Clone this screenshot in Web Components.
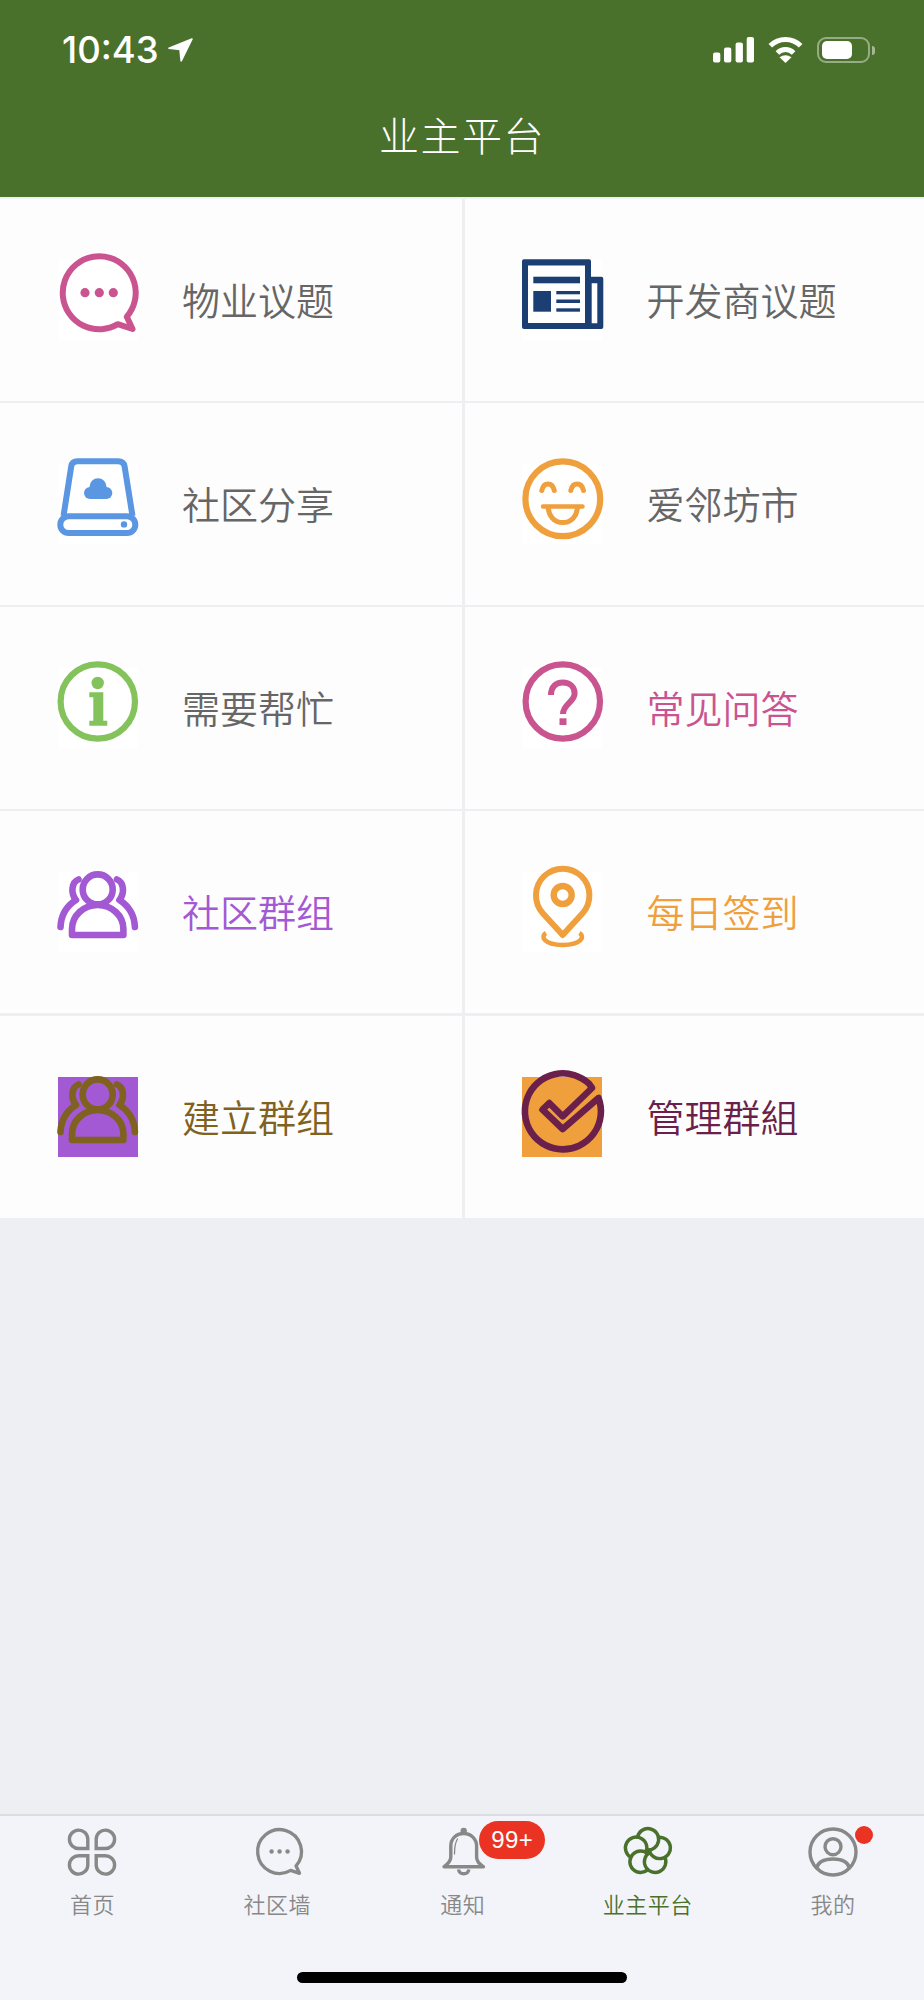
<!DOCTYPE html>
<html lang="zh-CN">
<head>
<meta charset="utf-8">
<title>业主平台</title>
<style>
html,body{margin:0;padding:0;background:#eeeff3;}
body{font-family:"Noto Sans CJK SC","Noto Sans",sans-serif;width:924px;height:2000px;overflow:hidden;}
</style>
</head>
<body>
<app-shell>
  <app-header slot="top" title-text="业主平台"></app-header>
  <menu-grid slot="main">
    <menu-item label="物业议题" icon="chat" icon-color="#c9548f"></menu-item>
    <menu-item label="开发商议题" icon="news" icon-color="#1c3f73"></menu-item>
    <menu-item label="社区分享" icon="drive" icon-color="#5b96e3"></menu-item>
    <menu-item label="爱邻坊市" icon="smile" icon-color="#ef9f3c"></menu-item>
    <menu-item label="需要帮忙" icon="info" icon-color="#84c25c"></menu-item>
    <menu-item label="常见问答" icon="question" icon-color="#c9548f" text-color="#c9548f"></menu-item>
    <menu-item label="社区群组" icon="people" icon-color="#a259d3" text-color="#a259d3"></menu-item>
    <menu-item label="每日签到" icon="pin" icon-color="#ef9f3c" text-color="#ef9f3c"></menu-item>
    <menu-item label="建立群组" icon="people" icon-color="#7f6120" icon-bg="#a259d3" text-color="#7f6120"></menu-item>
    <menu-item label="管理群組" icon="check" icon-color="#6b1f4b" icon-bg="#ef9f3c" text-color="#6b1f4b"></menu-item>
  </menu-grid>
  <tab-bar slot="bottom">
    <tab-item label="首页" icon="petals" w="48" h="50"></tab-item>
    <tab-item label="社区墙" icon="tabchat" w="48" h="50" dx="2.5"></tab-item>
    <tab-item label="通知" icon="bell" w="42" h="50" dx="1.8" ldx=".7" badge="99+"></tab-item>
    <tab-item label="业主平台" icon="flower" w="50" h="50" ldx="1" active></tab-item>
    <tab-item label="我的" icon="user" w="50" h="50" dx="1.7" ldx="1.4" dot></tab-item>
  </tab-bar>
</app-shell>
<script>
const ICONS = {
  chat: `<path fill="none" stroke="currentColor" stroke-width="6" stroke-linejoin="round" d="M59.8 64.2A36.5 36.5 0 1 1 68.8 56.7L74.5 69Z"/><g fill="currentColor"><circle cx="27" cy="32.7" r="4.6"/><circle cx="41.3" cy="32.7" r="4.6"/><circle cx="55.3" cy="32.7" r="4.6"/></g>`,
  news: `<path fill="currentColor" d="M2 -.7H67a2 2 0 0 1 2 2V16.7H79.3a2 2 0 0 1 2 2V67a2 2 0 0 1 -2 2H2a2 2 0 0 1 -2 -2V1.3a2 2 0 0 1 2 -2Z"/><path fill="#fff" d="M6 5.5H63V63H6ZM69.7 23.3H75.3V63.3H69.7Z"/><g fill="currentColor"><rect x="11.3" y="16.7" width="46.7" height="6.6"/><rect x="11.3" y="31" width="17.7" height="20.7"/><rect x="34.3" y="31" width="23.7" height="3.3"/><rect x="34.3" y="39.5" width="23.7" height="3.5"/><rect x="34.3" y="48.3" width="23.7" height="3.4"/></g>`,
  drive: `<g fill="none" stroke="currentColor" stroke-width="6" stroke-linejoin="round"><path d="M5.5 52L13.2 2.5Q14 -2.7 19.5 -2.7H60Q65.8 -2.7 66.6 2.5L74.5 52"/><rect x="2.3" y="52.3" width="75" height="16.7" rx="8.3"/></g><g fill="currentColor"><circle cx="66" cy="60.4" r="3.2"/><circle cx="40" cy="22.8" r="8.5"/><circle cx="32" cy="29" r="6"/><circle cx="48.3" cy="29" r="6"/><rect x="32" y="25" width="16" height="10"/></g>`,
  smile: `<g fill="none" stroke="currentColor"><circle cx="40.8" cy="34.8" r="37.4" stroke-width="6.2"/><path stroke-width="5" stroke-linecap="round" d="M19.8 26.5C20.8 22 23 20 26 20S31.3 22 32.3 26.5M48.8 26.5C49.8 22 52 20 55.1 20S60.5 22 61.5 26.5"/><path stroke-width="4.4" stroke-linecap="round" d="M21 42.5H60.5"/><path stroke-width="5" d="M26 42.5C26.7 52 32 58.6 40.8 58.6S55 52 55.6 42.5"/></g>`,
  info: `<circle cx="39.8" cy="33.5" r="37.2" fill="none" stroke="currentColor" stroke-width="6.2"/><circle cx="39.7" cy="15" r="6.2" fill="currentColor"/><path fill="currentColor" d="M31.3 24.3H45.3V52.7H49.3V57.7H31.3V52.7H35.3V29.3H31.3Z"/>`,
  question: `<circle cx="40.8" cy="33.5" r="37.2" fill="none" stroke="currentColor" stroke-width="6.2"/><path fill="none" stroke="currentColor" stroke-width="6" d="M29 27C29 18.5 34 14.5 40.8 14.5C48 14.5 52.6 19 52.6 25.5C52.6 34 41 36 41 46"/><rect x="37.5" y="50.3" width="7" height="6.7" fill="currentColor"/>`,
  people: `<g fill="none" stroke="currentColor" stroke-width="6.6" stroke-linecap="round" stroke-linejoin="round"><circle cx="39.7" cy="17.4" r="15"/><path d="M14 63V57A25.7 24 0 0 1 65.4 57V63Z"/><path d="M20.5 7.5C14 10 12 20.5 18 28C8.5 34 3 44 2.5 55M58.9 7.5C65.4 10 67.4 20.5 61.4 28C70.9 34 76.4 44 76.9 55"/></g>`,
  pin: `<g fill="none" stroke="currentColor" transform="translate(0 1)"><path stroke-width="6" stroke-linejoin="round" d="M40.7 62L21 40.4A26.7 26.7 0 1 1 60.4 40.4Z"/><circle cx="40.7" cy="22" r="9" stroke-width="6.4"/><path stroke-width="4.6" d="M24 60C18.5 63 21 71.6 40.7 72C60.4 71.6 63 63 57.4 60"/></g>`,
  check: `<path fill="none" stroke="currentColor" stroke-width="6.6" stroke-linejoin="round" d="M70 11L67 6.7A38 38 0 1 0 76.5 21L40.7 52L20.5 32.7L27.3 26L40.7 39.3Z"/>`,
  petals: `<g fill="none" stroke="currentColor" stroke-width="3.4"><path d="M19.8 21.5H10.8A9.2 9.2 0 1 1 19.8 12Z"/><path d="M28.2 21.5H37.2A9.2 9.2 0 1 0 28.2 12Z"/><path d="M19.8 28.7H10.8A9.2 9.2 0 1 0 19.8 38.2Z"/><path d="M28.2 28.7H37.2A9.2 9.2 0 1 1 28.2 38.2Z"/></g>`,
  tabchat: `<path fill="none" stroke="currentColor" stroke-width="5.6" stroke-linejoin="round" d="M59.8 64.2A36.5 36.5 0 1 1 68.8 56.7L74.5 69Z"/><g fill="currentColor"><circle cx="28" cy="32.7" r="3.7"/><circle cx="41.3" cy="32.7" r="3.7"/><circle cx="54.6" cy="32.7" r="3.7"/></g>`,
  bell: `<g fill="none" stroke="currentColor"><path stroke-width="3.4" stroke-linejoin="round" d="M1 39.8C5.5 36.5 7.8 34 7.8 30V19C7.8 12 13 6.5 20.7 6.5C28 6.5 33.6 12 33.6 19V30C33.6 34.5 36 36.5 40.5 39.8Z"/><path stroke-width="3.4" d="M15.5 42.5A5.3 5.3 0 0 0 25.9 42.5"/><path stroke-width="1.3" stroke-linecap="round" d="M14.5 12C12.5 15 11.5 19 11.5 27"/></g><circle cx="20.7" cy="4" r="3.2" fill="currentColor"/>`,
  flower: `<g transform="translate(25.9 24.7) scale(.95)" fill="none" stroke="currentColor" stroke-width="3.6" stroke-linecap="round"><path d="M-11.05 -15.2A11.3 11.3 0 1 1 -1.3 -1.8"/><path transform="rotate(72)" d="M-11.05 -15.2A11.3 11.3 0 1 1 -1.3 -1.8"/><path transform="rotate(144)" d="M-11.05 -15.2A11.3 11.3 0 1 1 -1.3 -1.8"/><path transform="rotate(216)" d="M-11.05 -15.2A11.3 11.3 0 1 1 -1.3 -1.8"/><path transform="rotate(288)" d="M-11.05 -15.2A11.3 11.3 0 1 1 -1.3 -1.8"/></g>`,
  user: `<g transform="translate(25 25)" fill="none" stroke="currentColor" stroke-width="3.4"><circle r="23"/><circle cy="-5.3" r="8"/><path d="M-16.5 16.5C-15 9 -8 7 0 7C8 7 15 9 16.5 16.5"/></g>`
};
const VIEW = {tabchat:"2 -6 80 79",bell:"0 0 42 50",petals:"0 0 48 50",flower:"0 0 50 50",user:"0 0 50 50"};

class AppShell extends HTMLElement{
  constructor(){super();this.attachShadow({mode:"open"}).innerHTML=`<style>
  :host{display:flex;flex-direction:column;width:924px;height:2000px;background:#eeeff3;}
  .main{flex:1;min-height:0;display:block;}
  </style><slot name="top"></slot><div class="main"><slot name="main"></slot></div><slot name="bottom"></slot>`;}
}
class AppHeader extends HTMLElement{
  constructor(){super();this.attachShadow({mode:"open"}).innerHTML=`<style>
  :host{display:block;background:#4a712c;color:#fff;height:197px;}
  status-bar{height:100px;}
  .title{text-align:center;font:300 40px/48px "Noto Sans CJK SC",sans-serif;padding-top:10px;letter-spacing:1.5px;}
  </style><status-bar></status-bar><div class="title"></div>`;
  this.shadowRoot.querySelector(".title").textContent=this.getAttribute("title-text");}
}
class StatusBar extends HTMLElement{
  constructor(){super();this.attachShadow({mode:"open"}).innerHTML=`<style>
  :host{display:flex;align-items:flex-start;justify-content:space-between;padding:37px 49px 0 62px;box-sizing:border-box;color:#fff;}
  .l{display:flex;align-items:center;gap:9px;height:26px;}
  .t{font:500 36.5px/26px Inter,"Liberation Sans",sans-serif;}
  .r{display:flex;align-items:flex-start;gap:14px;height:26px;}
  svg{display:block;}
  .batt{display:flex;align-items:center;gap:2px;}
  .shell{width:53px;height:26px;box-sizing:border-box;border:2px solid rgba(255,255,255,.42);border-radius:9px;padding:2px 0 0 3px;}
  .fill{width:30px;height:18px;background:#fff;border-radius:5px;}
  .cap{width:3px;height:9px;background:rgba(255,255,255,.5);border-radius:0 3px 3px 0;}
  </style>
  <div class="l"><span class="t">10:43</span><svg width="25" height="24" viewBox="0 0 25 24"><path fill="#fff" stroke="#fff" stroke-width="1.6" stroke-linejoin="round" d="M24 1L13.2 22.8L12 11.4L1 10.2Z"/></svg></div>
  <div class="r">
    <svg width="41" height="26" viewBox="0 0 41 26"><g fill="#fff"><rect x="0" y="15.6" width="7.3" height="10" rx="2"/><rect x="11" y="10.6" width="7.3" height="15" rx="2"/><rect x="22.6" y="5.6" width="7.3" height="20" rx="2"/><rect x="33.7" y="0" width="7.3" height="25.6" rx="2"/></g></svg>
    <svg width="35" height="26" viewBox="0 0 35 26"><g fill="none" stroke="#fff" stroke-width="5"><path d="M2.3 8.8A21.5 21.5 0 0 1 32.7 8.8"/><path d="M9.4 15.9A11.5 11.5 0 0 1 25.6 15.9"/></g><path fill="#fff" d="M17.5 26L11.5 20.2Q17.5 16.5 23.5 20.2Z"/></svg>
    <div class="batt"><div class="shell"><div class="fill"></div></div><div class="cap"></div></div>
  </div>`;}
}
class MenuGrid extends HTMLElement{
  constructor(){super();this.attachShadow({mode:"open"}).innerHTML=`<style>
  :host{display:grid;grid-template-columns:462px 459px;grid-auto-rows:202px;column-gap:3px;row-gap:2.2px;padding-top:1.8px;}
  </style><slot></slot>`;}
}
class AppIcon extends HTMLElement{
  connectedCallback(){
    const n=this.getAttribute("name"),w=this.getAttribute("w")||80,h=this.getAttribute("h")||80,v=this.getAttribute("view")||VIEW[n]||"0 0 80 80";
    this.attachShadow({mode:"open"}).innerHTML=`<style>:host{display:block;width:${w}px;height:${h}px;}svg{display:block;overflow:visible;}</style><svg width="${w}" height="${h}" viewBox="${v}">${ICONS[n]}</svg>`;
  }
}
class MenuItem extends HTMLElement{
  constructor(){super();this.attachShadow({mode:"open"});}
  connectedCallback(){
    const a=k=>this.getAttribute(k);
    this.shadowRoot.innerHTML=`<style>
    :host{display:flex;align-items:center;background:#fdfdfd;padding-left:58px;}
    :host(:nth-child(even)){padding-left:57px;}
    .box{width:80px;height:80px;background:${a("icon-bg")||"#fff"};color:${a("icon-color")};flex:none;}
    .label{margin:-2px 0 0 44px;font:350 38px/48px "Noto Sans CJK SC",sans-serif;color:${a("text-color")||"#666"};white-space:nowrap;}
    :host(:nth-child(even)) .label{margin-left:44.5px;}
    </style><div class="box"><app-icon name="${a("icon")}"></app-icon></div><span class="label">${a("label")}</span>`;
  }
}
class TabBar extends HTMLElement{
  constructor(){super();this.attachShadow({mode:"open"}).innerHTML=`<style>
  :host{display:block;height:186px;box-sizing:border-box;background:#f3f4f9;border-top:2px solid #dcdde3;}
  .row{display:grid;grid-template-columns:repeat(5,1fr);}
  .home{width:330px;height:11px;border-radius:6px;background:#000;margin:55px auto 0;}
  </style><div class="row"><slot></slot></div><div class="home"></div>`;}
}
class TabItem extends HTMLElement{
  constructor(){super();this.attachShadow({mode:"open"});}
  connectedCallback(){
    const a=k=>this.getAttribute(k),active=this.hasAttribute("active");
    const icon=a("icon"),dx=parseFloat(a("dx")||0),ldx=parseFloat(a("ldx")||0);
    this.shadowRoot.innerHTML=`<style>
    :host{display:flex;flex-direction:column;align-items:center;padding-top:11px;color:${active?"#4a712c":"#888"};}
    .ic{position:relative;height:50px;margin-left:${2*dx}px;}
    .label{font:350 22px/28px "Noto Sans CJK SC",sans-serif;letter-spacing:.5px;margin:12px 0 0 ${2*ldx}px;white-space:nowrap;}
    .badge{position:absolute;left:36px;top:-6px;width:66.7px;height:38px;border-radius:19px;background:#ea3323;color:#fff;font:400 24px/38px "Liberation Sans",sans-serif;text-align:center;letter-spacing:.4px;}
    .dot{position:absolute;left:47px;top:-1.3px;width:18px;height:18px;border-radius:50%;background:#ea3323;}
    </style><div class="ic"><app-icon name="${icon}" w="${a("w")}" h="${a("h")}"></app-icon>${a("badge")?`<span class="badge">${a("badge")}</span>`:""}${this.hasAttribute("dot")?`<span class="dot"></span>`:""}</div><span class="label">${a("label")}</span>`;
  }
}
customElements.define("app-icon",AppIcon);
customElements.define("status-bar",StatusBar);
customElements.define("app-header",AppHeader);
customElements.define("menu-item",MenuItem);
customElements.define("menu-grid",MenuGrid);
customElements.define("tab-item",TabItem);
customElements.define("tab-bar",TabBar);
customElements.define("app-shell",AppShell);
</script>
</body>
</html>
